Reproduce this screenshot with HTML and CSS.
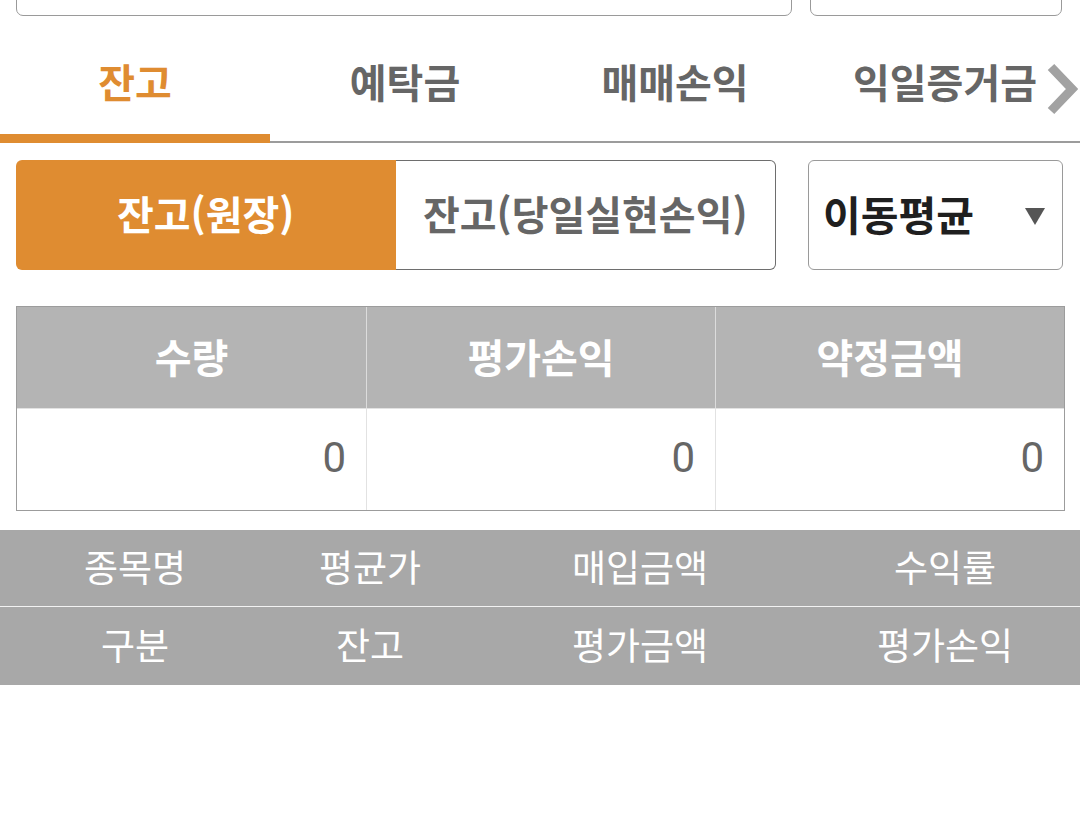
FILE: index.html
```html
<!DOCTYPE html>
<html lang="ko">
<head>
<meta charset="utf-8">
<link rel="stylesheet" href="styles.css">
</head>
<body>
<div class="top-boxes">
  <div class="top-box top-box-wide"></div>
  <div class="top-box top-box-narrow"></div>
</div>

<nav class="tabs">
  <div class="tab active">잔고</div>
  <div class="tab">예탁금</div>
  <div class="tab">매매손익</div>
  <div class="tab">익일증거금</div>
  <svg class="tab-more" width="32" height="52" viewBox="0 0 32 52">
    <polyline points="5,4 26,26 5,48" fill="none" stroke="#a2a2a2" stroke-width="9"/>
  </svg>
</nav>

<div class="controls">
  <div class="segment">
    <div class="seg-item seg-active">잔고(원장)</div>
    <div class="seg-item">잔고(당일실현손익)</div>
  </div>
  <div class="select">
    <span class="select-label">이동평균</span>
    <span class="select-arrow"></span>
  </div>
</div>

<div class="summary">
  <div class="sum-head">수량</div>
  <div class="sum-head">평가손익</div>
  <div class="sum-head">약정금액</div>
  <div class="sum-cell">0</div>
  <div class="sum-cell">0</div>
  <div class="sum-cell">0</div>
</div>

<div class="list-head">
  <div class="lh-row">
    <span>종목명</span><span>평균가</span><span>매입금액</span><span>수익률</span>
  </div>
  <div class="lh-row lh-row-2">
    <span>구분</span><span>잔고</span><span>평가금액</span><span>평가손익</span>
  </div>
</div>
</body>
</html>
```

FILE: styles.css
```css
*, *::before, *::after {
  box-sizing: border-box;
}

html, body {
  margin: 0;
  padding: 0;
  background: #ffffff;
}

body {
  width: 1080px;
  height: 833px;
  overflow: hidden;
  font-family: "Noto Sans CJK KR", "Noto Sans", sans-serif;
}

.top-boxes {
  display: flex;
  padding: 0 18px 0 16px;
  gap: 18px;
  margin-top: -30px;
}

.top-box {
  height: 46px;
  border: 1px solid #9a9a9a;
  border-radius: 7px;
  background: #fff;
}

.top-box-wide { width: 776px; }
.top-box-narrow { flex: 1; }

.tabs {
  position: relative;
  display: flex;
  height: 127px;
  border-bottom: 2px solid #9c9c9c;
}

.tab {
  width: 270px;
  display: flex;
  align-items: center;
  justify-content: center;
  padding-top: 12px;
  margin-bottom: -2px;
  border-bottom: 9px solid transparent;
  font-size: 40px;
  font-weight: 700;
  color: #666666;
  white-space: nowrap;
}

.tab.active {
  color: #df8c31;
  border-bottom-color: #df8c31;
}

.tab-more {
  position: absolute;
  right: 2px;
  top: 47px;
}

.controls {
  display: flex;
  gap: 32px;
  padding: 0 17px 0 16px;
  margin-top: 17px;
}

.segment {
  width: 760px;
  height: 110px;
  display: flex;
}

.seg-item {
  flex: 1;
  display: flex;
  align-items: center;
  justify-content: center;
  font-size: 40px;
  font-weight: 700;
  color: #666666;
  border: 1px solid #6e6e6e;
  border-left: none;
  border-radius: 0 6px 6px 0;
  padding-bottom: 4px;
  white-space: nowrap;
}

.seg-item.seg-active {
  background: #df8c31;
  color: #ffffff;
  border: none;
  border-radius: 6px 0 0 6px;
}

.select {
  flex: 1;
  height: 110px;
  border: 1px solid #9a9a9a;
  border-radius: 6px;
  display: flex;
  align-items: center;
  justify-content: space-between;
  padding: 0 17px 4px 14px;
}

.select-label {
  font-size: 41px;
  font-weight: 700;
  color: #1f1f1f;
  white-space: nowrap;
}

.select-arrow {
  width: 0;
  height: 0;
  border-left: 10px solid transparent;
  border-right: 10px solid transparent;
  border-top: 17px solid #555555;
  margin-top: 6px;
}

.summary {
  margin: 36px 15px 0 16px;
  border: 1px solid #9c9c9c;
  display: grid;
  grid-template-columns: 1fr 1fr 1fr;
  grid-template-rows: 101px 102px;
}

.sum-head {
  background: #b4b4b4;
  color: #ffffff;
  font-size: 40px;
  font-weight: 700;
  display: flex;
  align-items: center;
  justify-content: center;
  border-left: 1px solid #dcdcdc;
  padding-bottom: 4px;
}

.sum-cell {
  display: flex;
  align-items: center;
  justify-content: flex-end;
  padding: 0 20px 4px 0;
  font-family: Roboto, "Noto Sans", sans-serif;
  font-size: 42px;
  color: #666666;
  border-left: 1px solid #e2e2e2;
  border-top: 1px solid #e2e2e2;
}

.sum-head:first-child,
.sum-head:nth-child(4),
.sum-cell:nth-child(4) {
  border-left: none;
}

.list-head {
  margin-top: 19px;
  background: #a8a8a8;
}

.lh-row {
  display: grid;
  grid-template-columns: 270px 200px 340px 270px;
  height: 77px;
  align-items: center;
  color: #ffffff;
  font-size: 37px;
  font-weight: 400;
  text-align: center;
  border-bottom: 1px solid #f2f2f2;
}

.lh-row span {
  padding-bottom: 4px;
  white-space: nowrap;
}

.lh-row-2 {
  height: 78px;
  border-bottom: none;
}
```
